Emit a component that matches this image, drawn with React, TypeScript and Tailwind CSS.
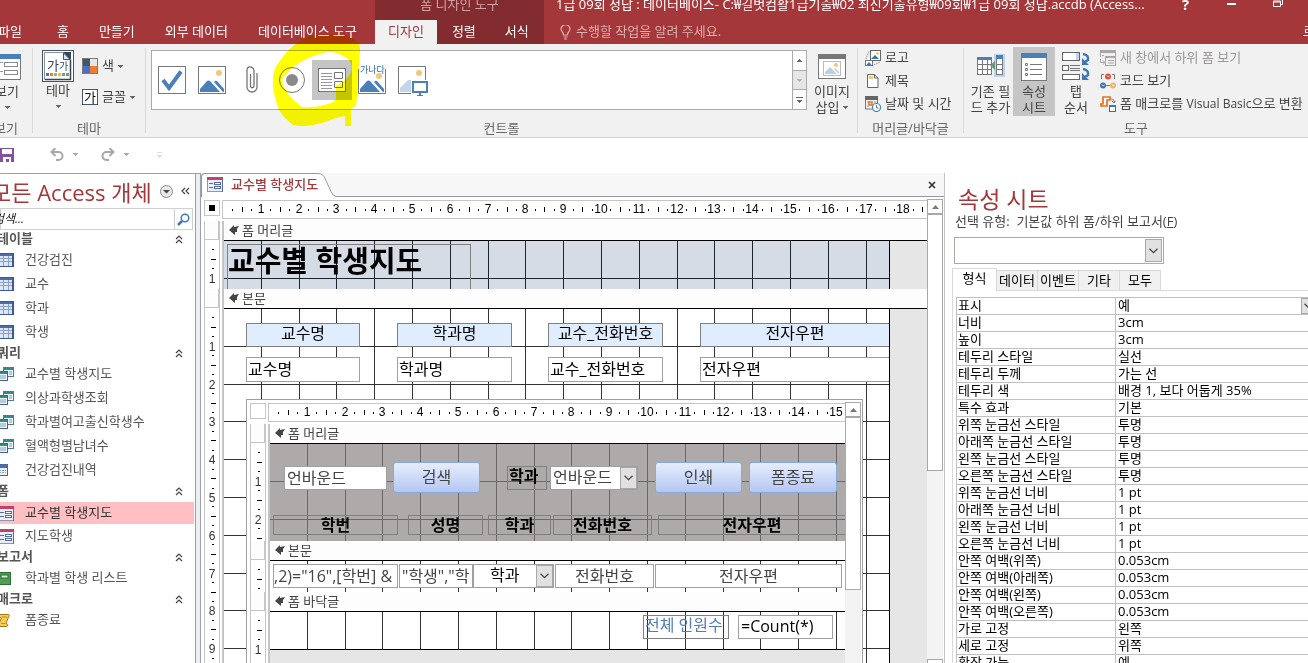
import type { ReactNode } from "react";
import clsx from "clsx";

const CM = 37.8;

const at = (i: number) => Math.floor(i * CM - 0.5);

const range = (n: number) => Array.from({ length: n }, (_, i) => i);

/* ---------- small drawings ---------- */

function Caret({ className = "fill-[#666]" }: { className?: string }) {
  return (
    <svg width="5" height="3" className={clsx("shrink-0", className)} shapeRendering="crispEdges">
      <path d="M0 0h5v1H0zM1 1h3v1H1zM2 2h1v1H2z" />
    </svg>
  );
}

function Chevron() {
  return (
    <svg width="9" height="6" viewBox="0 0 9 6" fill="none" stroke="#444" strokeWidth="1.2">
      <path d="M0.5 0.8 4.5 4.6 8.5 0.8" />
    </svg>
  );
}

function Collapse() {
  return (
    <svg width="8" height="9" viewBox="0 0 8 9" fill="none" stroke="#444" strokeWidth="1.2">
      <path d="M1 4 4 1l3 3M1 8l3-3 3 3" />
    </svg>
  );
}

function TableIcon() {
  return (
    <svg width="16" height="14" viewBox="0 0 16 14">
      <rect x="0.5" y="0.5" width="15" height="13" fill="#dce6f7" stroke="#3d5a94" />
      <path d="M1 1h14v2H1z" fill="#4d6ca8" />
      <path d="M1 5.5h14M1 8.5h14M5.5 3v10M10.5 3v10" stroke="#8ba0c8" />
      <path d="M14.5 1v12" stroke="#3d5a94" />
    </svg>
  );
}

function QueryIcon() {
  return (
    <svg width="16" height="15" viewBox="0 0 16 15">
      <rect x="5.5" y="0.5" width="10" height="9" fill="#f4f8fc" stroke="#47808a" />
      <path d="M6 1h9v2H6z" fill="#2f8f86" />
      <path d="M11 5h3M11 7h3" stroke="#7f9cc0" />
      <rect x="0.5" y="4.5" width="9" height="9" fill="#f4f8fc" stroke="#3f6487" />
      <path d="M1 5h8v2H1z" fill="#2f8f86" />
      <path d="M2 9h6M2 11h6" stroke="#7f9cc0" />
    </svg>
  );
}

function CrosstabIcon() {
  return (
    <svg width="14" height="12" viewBox="0 0 14 12" className="-ml-1">
      <rect x="0.5" y="0.5" width="13" height="11" fill="#eef3fb" stroke="#4a67a0" />
      <path d="M1 1h12v3H1z" fill="#4a6db0" />
      <path d="M2 6.5h10M2 8.5h10" stroke="#8aa3d0" strokeDasharray="2 1" />
    </svg>
  );
}

function FormIcon() {
  return (
    <svg width="16" height="15" viewBox="0 0 16 15">
      <rect x="0.5" y="0.5" width="15" height="14" fill="#e9eefa" stroke="#8c95b4" />
      <path d="M0 0h16v3H0z" fill="#c0426c" />
      <path d="M2 6.5h4M2 10.5h4" stroke="#566ca8" />
      <rect x="7.5" y="5.5" width="6" height="2" fill="#fff" stroke="#566ca8" />
      <rect x="7.5" y="9.5" width="6" height="2" fill="#fff" stroke="#566ca8" />
      <path d="M15.5 3v12" stroke="#5b6a9c" />
    </svg>
  );
}

function ReportIcon() {
  return (
    <svg width="13" height="13" viewBox="0 0 13 13">
      <rect x="0.5" y="0.5" width="12" height="12" fill="#4f9e55" stroke="#2f6b35" />
      <rect x="3" y="3" width="7" height="3" fill="#d8efd6" stroke="#2f6b35" />
      <path d="M1.5 1v11" stroke="#8fcf90" />
    </svg>
  );
}

function MacroIcon() {
  return (
    <svg width="12" height="13" viewBox="0 0 12 13">
      <path d="M2 .5h8.5c1 0 1 2 0 2.5L8 9.5c2 0 2.5 3 .5 3H1c-2-.3-1.5-3 0-3L3.5 4C1 3.5 1 1 2 .5z" fill="#f5cc55" stroke="#a5761c" />
      <path d="M4 3h5M3 9.5h4" stroke="#c58d22" />
    </svg>
  );
}

function ViewIcon() {
  return (
    <svg width="28" height="26" viewBox="0 0 28 26">
      <path d="M0 0h28v5H0z" fill="#4a80b9" />
      <path d="M.5 5v20.5h27V5" fill="#fff" stroke="#777" />
      <path d="M3 8.5h7M3 17.5h7" stroke="#999" />
      <rect x="11.5" y="8.5" width="13" height="4" fill="#fff" stroke="#8a8a8a" />
      <rect x="11.5" y="16.5" width="13" height="4" fill="#fff" stroke="#8a8a8a" />
    </svg>
  );
}

function ThemeIcon() {
  return (
    <svg width="32" height="32" viewBox="0 0 32 32">
      <rect x="0.5" y="0.5" width="31" height="31" fill="#fff" stroke="#44546a" />
      <path d="M2.5 2.5h19l7 7V29.5h-26z" fill="#fff" stroke="#8a93a3" />
      <path d="M21 2h8v8z" fill="#33455f" />
      <path d="M21.5 3v6.5H28z" fill="#dfe4ec" stroke="#44546a" />
      <path d="M28.5 10v19.5H3" fill="none" stroke="#33455f" strokeWidth="1.5" />
      <text x="5" y="20" fontSize="13" fill="#33455f">가</text>
      <text x="17" y="20" fontSize="10" fill="#33455f">가</text>
      <path d="M4 23h3v3H4z" fill="#4472c4" />
      <path d="M8 23h3v3H8z" fill="#ed7d31" />
      <path d="M12 23h3v3h-3z" fill="#a5a5a5" />
      <path d="M16 23h3v3h-3z" fill="#ffc000" />
      <path d="M20 23h3v3h-3z" fill="#5b9bd5" />
      <path d="M24 23h3v3h-3z" fill="#70ad47" />
    </svg>
  );
}

function ColorsIcon() {
  return (
    <svg width="16" height="16" viewBox="0 0 16 16">
      <path d="M0 0h16v16H0z" fill="#7a7a7a" />
      <path d="M1 1h7v7H1z" fill="#44546a" />
      <path d="M8 1h7v7H8z" fill="#e7e6e6" />
      <path d="M1 8h7v7H1z" fill="#4472c4" />
      <path d="M8 8h7v7H8z" fill="#ed7d31" />
    </svg>
  );
}

function FontsIcon() {
  return (
    <svg width="16" height="16" viewBox="0 0 16 16">
      <rect x="0.5" y="0.5" width="15" height="15" fill="#fff" stroke="#44546a" />
      <text x="2" y="13" fontSize="13" fill="#111">가</text>
    </svg>
  );
}

const galleryIcons: { name: string; art: ReactNode }[] = [
  {
    name: "확인란",
    art: (
      <>
        <rect x="0.5" y="0.5" width="27" height="27" fill="#fff" stroke="#777" />
        <path d="M5 14l6 8L23 5.5" fill="none" stroke="#4a80b9" strokeWidth="4" />
      </>
    ),
  },
  {
    name: "이미지",
    art: (
      <>
        <rect x="0.5" y="0.5" width="27" height="27" fill="#fff" stroke="#777" />
        <circle cx="21" cy="7" r="3" fill="#edc87e" />
        <path d="M2 26v-3l7-8q1.5-1 3 0l10 11zM16 16q1.5-2 3-1l7 8v3h-1z" fill="#4a80b9" />
      </>
    ),
  },
  {
    name: "첨부 파일",
    art: (
      <path
        d="M12.5 8v12a1.5 1.5 0 0 0 3.5 0V5a4 4 0 0 0-5-4q-2 .5-2 3v17a5 5 0 0 0 10 0V7"
        fill="none"
        stroke="#777"
        strokeWidth="1.3"
      />
    ),
  },
  {
    name: "옵션 단추",
    art: (
      <>
        <circle cx="14" cy="14" r="12.5" fill="#fff" stroke="#777" />
        <circle cx="14" cy="14" r="6" fill="#8a8a8a" />
      </>
    ),
  },
  {
    name: "하위 폼/하위 보고서",
    art: (
      <>
        <rect x="0.5" y="2.5" width="27" height="23" fill="#fff" stroke="#777" />
        <path d="M3 7.5h11M3 10.5h11M3 13.5h11M3 16.5h11M3 19.5h11M3 22.5h11" stroke="#999" />
        <path d="M16.5 6.5h8v6h-8zM16.5 15.5h8v6h-8z" fill="#fff" stroke="#777" />
      </>
    ),
  },
  {
    name: "바운드 개체 틀",
    art: (
      <>
        <path d="M.5 3v24.5h27V3" fill="#fff" stroke="#777" />
        <circle cx="21" cy="10" r="3" fill="#edc87e" />
        <path d="M2 26v-3l7-8q1.5-1 3 0l10 11zM16 16q1.5-2 3-1l7 8v3h-1z" fill="#4a80b9" />
        <text x="2" y="7" fontSize="9" fill="#2f6ca8">가나다</text>
      </>
    ),
  },
  {
    name: "언바운드 개체 틀",
    art: (
      <>
        <path d="M13 27.5H.5V.5h27V14" fill="#fff" stroke="#777" />
        <circle cx="21" cy="7" r="3" fill="#edc87e" />
        <path d="M2 26v-4l8-8h3v12z" fill="#c2d5ea" />
        <rect x="15" y="16" width="14" height="10" fill="#fff" stroke="#4a80b9" strokeWidth="2" />
        <path d="M21 27h2v2h-2zM19 29h6v1h-6z" fill="#4a80b9" />
      </>
    ),
  },
];

function InsertImageIcon() {
  return (
    <svg width="28" height="26" viewBox="0 0 28 26">
      <rect x="0.5" y="0.5" width="27" height="24" fill="#fff" stroke="#777" />
      <path d="M0 0h28v5H0z" fill="#777" />
      <rect x="5.5" y="7.5" width="17" height="14" fill="#fff" stroke="#bbb" />
      <circle cx="18" cy="11" r="2" fill="#edc87e" />
      <path d="M7 20v-2l5-5 7 7zM16 15l1-1 4 4v2z" fill="#b9cfe6" />
    </svg>
  );
}

function LogoIcon() {
  return (
    <svg width="16" height="16" viewBox="0 0 16 16">
      <rect x="5.5" y="0.5" width="10" height="10" fill="#fff" stroke="#666" />
      <circle cx="12.5" cy="3.5" r="1.3" fill="#edb95e" />
      <path d="M6 9l4-4 4 4z" fill="#3a73b0" />
      <rect x="0.5" y="10.5" width="7" height="5" fill="#fff" stroke="#777" />
      <path d="M1.5 15 4 12l2.5 3z" fill="#3a73b0" />
      <path d="M1 9 4 1M9 15l6-3" stroke="#777" strokeDasharray="1 1" />
    </svg>
  );
}

function TitleIcon() {
  return (
    <svg width="16" height="16" viewBox="0 0 16 16">
      <path d="M2.5 1.5h7l3.5 3.5v9.5H2.5z" fill="#fff" stroke="#666" />
      <path d="M9.5 1.5V5H13" fill="none" stroke="#666" />
      <path d="M4 3h4v3H4z" fill="#edc87e" />
    </svg>
  );
}

function DateIcon() {
  return (
    <svg width="16" height="16" viewBox="0 0 16 16">
      <path d="M0 0h13v4H0z" fill="#666" />
      <path d="M.5 3v10h8M12.5 4v3" fill="none" stroke="#777" />
      <path d="M2 6h2M2 10h2M9 6h2" stroke="#999" />
      <rect x="4" y="6" width="3" height="3" fill="#fff" stroke="#e2711d" strokeWidth="1.5" />
      <circle cx="11.5" cy="11.5" r="4" fill="#fff" stroke="#4a80b9" strokeWidth="1.2" />
      <path d="M11.5 9v3h2" fill="none" stroke="#4a80b9" />
    </svg>
  );
}

function FieldsIcon() {
  return (
    <svg width="28" height="26" viewBox="0 0 28 26">
      <path d="M17 0h11v23H17z" fill="#bcd3ea" />
      <rect x="0.5" y="3.5" width="14" height="17" fill="#fff" stroke="#777" />
      <path d="M0 3h15v3H0z" fill="#4a80b9" />
      <path d="M1 10.5h13M1 15.5h13M5.5 6v14M10.5 6v14" stroke="#777" />
      <rect x="19.5" y="3.5" width="6" height="17" fill="#fff" stroke="#777" />
      <path d="M19 1h7v4h-7z" fill="#4a80b9" />
      <path d="M20 10.5h5M20 15.5h5" stroke="#777" />
      <path d="M18 7v9l-5-4.5z" fill="#5d9c80" />
    </svg>
  );
}

function SheetIcon() {
  return (
    <svg width="26" height="28" viewBox="0 0 26 28">
      <rect x="0.5" y="0.5" width="25" height="27" fill="#fff" stroke="#777" />
      <path d="M0 0h26v5H0z" fill="#4a80b9" />
      <path d="M9 11.5h12M9 16.5h12M9 21.5h12" stroke="#777" />
      <path d="M4.5 10.5h2v2h-2zM4.5 15.5h2v2h-2zM4.5 20.5h2v2h-2z" fill="#fff" stroke="#777" />
    </svg>
  );
}

function TabOrderIcon() {
  return (
    <svg width="28" height="29" viewBox="0 0 28 29">
      <rect x="0.5" y="0.5" width="17" height="8" fill="#fff" stroke="#666" />
      <path d="M14 1h3v7h-3z" fill="#bcd3ea" />
      <rect x="0.5" y="13.5" width="6" height="5" fill="#fff" stroke="#666" />
      <path d="M8 13.5h10M8 16.5h10M8 18.5h10" stroke="#777" />
      <rect x="0.5" y="22.5" width="17" height="5" fill="#fff" stroke="#666" />
      <path d="M21 2q6 1 5 6l-3 2M21 17q6 1 5 6l-3 2" fill="none" stroke="#3f77b4" strokeWidth="2.5" />
      <path d="M20 6v7h7zM20 21v7h7z" fill="#3f77b4" />
    </svg>
  );
}

function NewWindowIcon() {
  return (
    <svg width="16" height="16" viewBox="0 0 16 16" fill="none" stroke="#aaa5a8">
      <path d="M.5 7V.5h15V6" />
      <path d="M0 1.5h16" strokeWidth="3" />
      <rect x="5.5" y="6.5" width="10" height="9" />
      <path d="M5 7.5h11M8 10.5h6M8 13h6M2 5.5h2M.5 9v3.5h4M3 10.5l2 2-2 2" />
    </svg>
  );
}

function CodeIcon() {
  return (
    <svg width="16" height="16" viewBox="0 0 16 16">
      <path d="M4 1.5H1.5V6M12 1.5h2.5V6M6 12.5h4" fill="none" stroke="#777" />
      <circle cx="8" cy="3.5" r="3" fill="#d9533a" />
      <circle cx="3" cy="12.5" r="3" fill="#3f77b4" />
      <circle cx="13" cy="12.5" r="3" fill="#edb95e" />
      <path d="M7 2.5 8 4l1.5-1M2 11.5 3 13l1.5-1M12 11.5l1 1.5 1.5-1" stroke="#fff" fill="none" strokeWidth=".7" />
    </svg>
  );
}

function ConvertIcon() {
  return (
    <svg width="16" height="16" viewBox="0 0 16 16">
      <path d="M3 1h7v3H7v6H1V8h2z" fill="#fff" stroke="#e2711d" strokeWidth="1.7" />
      <path d="M11 3q4 0 3 4M12 5l2 2 1.5-2" stroke="#777" fill="none" />
      <rect x="9.5" y="9.5" width="6" height="6" fill="#fff" stroke="#666" />
      <path d="M9 9h7v2H9z" fill="#3f77b4" />
    </svg>
  );
}

/* highlighter stroke drawn around the subform control */
function Highlighter() {
  return (
    <svg
      className="pointer-events-none absolute left-[272px] top-[34px] mix-blend-multiply"
      width="88"
      height="92"
      viewBox="0 0 88 92"
      aria-hidden="true"
    >
      <path
        fillRule="evenodd"
        fill="#ff0"
        d="M1 45q0-8 4-14t8-11 12-11 14-7 18-2q12 0 19 3 8 3 11 6 2 6 0 16-1 30-3 47l-5 2v30h-6V82q-6 1-12 3-10 4-20 6-12 2-20 0-9-7-14-15Q0 58 1 45zM10 46q1 8 7 15 6 7 13 12 12 1 22-2 10-2 12-6V52q12-6 15-14 2-7-2-12Q66 17 56 18q-12 2-22 7-10 5-17 12-6 5-7 9z"
      />
    </svg>
  );
}

/* ---------- title bar and ribbon ---------- */

const tabs = ["홈", "만들기", "외부 데이터", "데이터베이스 도구"];

function TitleBar() {
  return (
    <header className="flex h-11 shrink-0 overflow-hidden whitespace-nowrap bg-[#a4373a] text-white">
      <nav className="flex w-[375px] shrink-0 items-end">
        <button className="-ml-[17px] mr-[5px] h-6 px-[15px]">파일</button>
        {tabs.map((t) => (
          <button key={t} className="h-6 px-[15px]">
            {t}
          </button>
        ))}
      </nav>
      <div className="flex w-[169px] shrink-0 flex-col bg-[#822c2f]">
        <span className="h-5 text-center leading-[8px] text-[#d3a0a2]">폼 디자인 도구</span>
        <div className="flex h-6">
          <button className="bg-[#f1f1f1] px-[13px] text-[#a4373a]">디자인</button>
          <button className="px-[15px]">정렬</button>
          <button className="px-[14px]">서식</button>
        </div>
      </div>
      <div className="flex min-w-0 flex-1 flex-col">
        <div className="flex h-5 justify-between pl-3 pr-6 leading-[8px]">
          <h1>1급 09회 정답 : 데이터베이스- C:₩길벗컴활1급기출₩02 최신기출유형₩09회₩1급 09회 정답.accdb (Access...</h1>
          <div className="flex w-[102px] items-start justify-between">
            <button className="text-[15px] font-bold leading-[8px]" aria-label="도움말">
              ?
            </button>
            <button aria-label="최소화" className="pt-[3px]">
              <svg width="9" height="2">
                <path d="M0 0h9v2H0z" fill="#fff" />
              </svg>
            </button>
            <button aria-label="이전 크기로 복원">
              <svg width="11" height="7" fill="none" stroke="#fff">
                <path d="M.5 1v5.5h7V1zM0 2h8M9.5 0v4.5H8" />
              </svg>
            </button>
          </div>
        </div>
        <div className="flex h-6 items-center pl-4">
          <svg width="11" height="15" viewBox="0 0 11 15" fill="none" stroke="#dfb0b1" strokeWidth="1.2">
            <path d="M3.5 10q0-2-1.5-3.5a4.3 4.3 0 1 1 7 0Q7.5 8 7.5 10zM3.5 12h4M4 14h3" />
          </svg>
          <input
            aria-label="수행할 작업"
            className="ml-[5px] w-[240px] bg-transparent placeholder:text-[#dfb0b1]"
            placeholder="수행할 작업을 알려 주세요."
          />
          <button className="ml-auto w-[5px] overflow-hidden text-left">로그인</button>
        </div>
      </div>
    </header>
  );
}

function Group({ label, className, children }: { label: string; className?: string; children: ReactNode }) {
  return (
    <section className={clsx("flex shrink-0 flex-col", className)}>
      <div className="flex h-[75px] items-start">{children}</div>
      <div className="text-center leading-[18px] text-[#666]">{label}</div>
    </section>
  );
}

function Divider() {
  return <div className="my-1 w-px shrink-0 bg-[#dadada]" />;
}

function BigButton({ icon, lines, caret, active, className }: {
  icon: ReactNode;
  lines: string[];
  caret?: boolean;
  active?: boolean;
  className?: string;
}) {
  return (
    <button
      className={clsx("flex h-[69px] shrink-0 flex-col items-center pt-1 leading-4", active && "bg-[#c5c5c5]", className)}
    >
      <span className="flex h-[31px] items-center">{icon}</span>
      <span className="mt-[1px]">{lines[0]}</span>
      <span className="flex h-4 items-center gap-1">
        {lines[1]}
        {caret && <Caret />}
      </span>
    </button>
  );
}

function SmallButton({ icon, label, caret, disabled }: {
  icon: ReactNode;
  label: ReactNode;
  caret?: boolean;
  disabled?: boolean;
}) {
  return (
    <button disabled={disabled} className="flex h-[23px] items-center gap-1 pb-px disabled:text-[#9b979a]">
      {icon}
      <span>{label}</span>
      {caret && <Caret className="fill-[#666]" />}
    </button>
  );
}

function Ribbon() {
  return (
    <div className="flex h-[94px] shrink-0 overflow-hidden whitespace-nowrap border-b border-[#d5d5d5] bg-[#f1f1f1] text-[#444]">
      <Group label="보기" className="-ml-[20px] w-[52px]">
        <BigButton className="ml-[11px] mt-[3px] w-8" icon={<ViewIcon />} lines={["보기", ""]} caret />
      </Group>
      <Divider />
      <Group label="테마" className="w-28">
        <BigButton className="ml-[7px] mt-[2px] w-9" icon={<ThemeIcon />} lines={["테마", ""]} caret />
        <div className="ml-[6px] flex flex-col gap-2 pt-[11px]">
          <SmallButton icon={<ColorsIcon />} label="색" caret />
          <SmallButton icon={<FontsIcon />} label="글꼴" caret />
        </div>
      </Group>
      <Divider />
      <Group label="컨트롤" className="min-w-0 flex-1">
        <div className="ml-[5px] mt-[6px] flex h-[60px] min-w-0 flex-1 border border-[#ababab] bg-white">
          <div className="flex flex-1 items-center">
            {galleryIcons.map((g, i) => (
              <button
                key={g.name}
                aria-label={g.name}
                className={clsx("flex h-10 w-10 items-center justify-center", i === 4 && "bg-[#c5c5c5]")}
              >
                <svg width="28" height="28" viewBox="0 0 28 28" overflow="visible">
                  {g.art}
                </svg>
              </button>
            ))}
          </div>
          <div className="flex w-[14px] flex-col divide-y divide-[#ababab] border-l border-[#ababab]">
            <button aria-label="위로" className="flex flex-1 items-center justify-center">
              <Caret className="rotate-180 fill-[#666]" />
            </button>
            <button aria-label="아래로" className="flex flex-1 items-center justify-center bg-[#e6e6e6]">
              <Caret className="fill-[#b5b5b5]" />
            </button>
            <button aria-label="자세히" className="flex flex-1 flex-col items-center justify-center gap-[2px]">
              <span className="h-px w-[7px] bg-[#666]" />
              <Caret />
            </button>
          </div>
        </div>
        <BigButton className="mx-[5px] mt-[3px] w-10" icon={<InsertImageIcon />} lines={["이미지", "삽입"]} caret />
      </Group>
      <Divider />
      <Group label="머리글/바닥글" className="w-[105px]">
        <div className="flex flex-col pl-[7px] pt-[3px]">
          <SmallButton icon={<LogoIcon />} label="로고" />
          <SmallButton icon={<TitleIcon />} label="제목" />
          <SmallButton icon={<DateIcon />} label="날짜 및 시간" />
        </div>
      </Group>
      <Divider />
      <Group label="도구" className="w-[344px]">
        <BigButton className="ml-1 mt-[3px] w-[45px]" icon={<FieldsIcon />} lines={["기존 필", "드 추가"]} />
        <BigButton className="mt-[3px] w-[42px]" icon={<SheetIcon />} lines={["속성", "시트"]} active />
        <BigButton className="mt-[3px] w-[42px]" icon={<TabOrderIcon />} lines={["탭", "순서"]} />
        <div className="flex flex-col pl-[3px] pt-[3px]">
          <SmallButton icon={<NewWindowIcon />} label="새 창에서 하위 폼 보기" disabled />
          <SmallButton icon={<CodeIcon />} label="코드 보기" />
          <SmallButton
            icon={<ConvertIcon />}
            label={
              <>
                폼 매크로를 <span className="text-xs">Visual Basic</span>으로 변환
              </>
            }
          />
        </div>
      </Group>
    </div>
  );
}

function QuickAccess() {
  return (
    <div className="flex h-[35px] shrink-0 items-center bg-white pb-[2px]">
      <button aria-label="저장">
        <svg width="14" height="14" viewBox="0 0 14 14">
          <path d="M0 0h14v14H0z" fill="#8052a0" />
          <path d="M2 1h10v5H2zM3 9h8v5H9v-3H6v3H3z" fill="#fff" />
        </svg>
      </button>
      <button aria-label="실행 취소" className="ml-9 flex items-center gap-[9px]">
        <svg width="14" height="13" viewBox="0 0 14 13" fill="none" stroke="#a8a8a8" strokeWidth="2">
          <path d="M1 4h7.5a4 4 0 0 1 0 8H6M5.5 0 1.5 4l4 4" />
        </svg>
        <Caret className="fill-[#a8a8a8]" />
      </button>
      <button aria-label="다시 실행" className="ml-[23px] flex items-center gap-[9px]">
        <svg width="14" height="13" viewBox="0 0 14 13" fill="none" stroke="#a8a8a8" strokeWidth="2">
          <path d="M13 4H5.5a4 4 0 0 0 0 8H8M8.5 0l4 4-4 4" />
        </svg>
        <Caret className="fill-[#a8a8a8]" />
      </button>
      <button aria-label="빠른 실행 도구 모음 사용자 지정" className="ml-7 flex flex-col items-center gap-[2px]">
        <span className="h-px w-[5px] bg-[#ddd]" />
        <Caret className="fill-[#ddd]" />
      </button>
    </div>
  );
}

/* ---------- navigation pane ---------- */

const objects = [
  { title: "테이블", icon: <TableIcon />, items: ["건강검진", "교수", "학과", "학생"] },
  {
    title: "쿼리",
    icon: <QueryIcon />,
    items: ["교수별 학생지도", "의상과학생조회", "학과별여고출신학생수", "혈액형별남녀수", "건강검진내역"],
  },
  { title: "폼", icon: <FormIcon />, items: ["교수별 학생지도", "지도학생"] },
  { title: "보고서", icon: <ReportIcon />, items: ["학과별 학생 리스트"] },
  { title: "매크로", icon: <MacroIcon />, items: ["폼종료"] },
];

function NavPane() {
  return (
    <aside className="flex w-[201px] shrink-0 overflow-hidden whitespace-nowrap border-r border-t border-[#9aa0ac] bg-[#eceef1] text-[#555]">
      <div className="flex min-w-0 flex-1 flex-col border-r border-[#9aa0ac] bg-white">
        <div className="-ml-[9px] flex h-[34px] items-center">
          <h2 className="w-[169px] pt-[2px] text-[22px] text-[#a4373a]">모든 Access 개체</h2>
          <button aria-label="범주 선택">
            <svg width="13" height="13" viewBox="0 0 13 13">
              <circle cx="6.5" cy="6.5" r="6" fill="#e8e8ea" stroke="#8b8b92" />
              <path d="M3 5h7L6.5 8.5z" fill="#444" />
            </svg>
          </button>
          <button aria-label="탐색 창 접기" className="ml-2">
            <svg width="9" height="8" viewBox="0 0 9 8" fill="none" stroke="#444" strokeWidth="1.2">
              <path d="M4 1 1 4l3 3M8 1 5 4l3 3" />
            </svg>
          </button>
        </div>
        <div className="mr-[2px] flex h-[22px] border border-[#d0d0d0]">
          <input
            aria-label="검색"
            placeholder="검색..."
            className="-ml-[14px] min-w-0 flex-1 pl-[6px] text-xs italic placeholder:text-[#222]"
          />
          <button aria-label="검색 시작" className="flex w-[18px] items-center justify-center border-l border-[#d0d0d0]">
            <svg width="13" height="13" viewBox="0 0 13 13" fill="none" stroke="#3f77b4">
              <circle cx="8" cy="5" r="3.8" strokeWidth="1.5" />
              <path d="M5 8 1 12" strokeWidth="2.5" />
            </svg>
          </button>
        </div>
        {objects.map((g) => (
          <section key={g.title}>
            <button className="flex h-[18px] w-full items-center justify-between pr-3">
              <h3 className="-ml-[3px] font-bold">{g.title}</h3>
              <Collapse />
            </button>
            <ul>
              {g.items.map((item, i) => (
                <li
                  key={item}
                  className={clsx("mr-px h-6", g.title === "폼" && i === 0 && "bg-[#ffc0c3] bg-clip-content pt-[2px] text-[#333]")}
                >
                  <a href="#" className="-ml-[2px] flex h-full items-center">
                    <span className="w-[27px]">{item === "건강검진내역" ? <CrosstabIcon /> : g.icon}</span>
                    {item}
                  </a>
                </li>
              ))}
            </ul>
          </section>
        ))}
      </div>
      <div className="w-1" />
    </aside>
  );
}

/* ---------- form designer ---------- */

function HRuler({ cm }: { cm: number }) {
  const w = Math.ceil(cm * CM);
  return (
    <svg width={w} height="17" shapeRendering="crispEdges" className="block font-['Liberation_Sans',sans-serif] text-xs">
      {range(Math.ceil(cm)).map((i) => (
        <g key={i}>
          <rect x={at(i + 0.25)} y="8" width="1" height="2" />
          <rect x={at(i + 0.5)} y="6" width="1" height="5" />
          <rect x={at(i + 0.75)} y="8" width="1" height="2" />
          <text x={at(i + 1)} y="12" textAnchor="middle">
            {i + 1}
          </text>
        </g>
      ))}
    </svg>
  );
}

function VRuler({ height }: { height: number }) {
  return (
    <svg
      width="14"
      height={height}
      overflow="visible"
      shapeRendering="crispEdges"
      className="block font-['Liberation_Sans',sans-serif] text-xs"
    >
      {range(Math.round(height / CM)).map((i) => (
        <g key={i}>
          <rect x="7" y={at(i + 0.25)} width="2" height="1" />
          <rect x="6" y={at(i + 0.5)} width="5" height="1" />
          <rect x="7" y={at(i + 0.75)} width="2" height="1" />
          {at(i + 1) <= height && (
            <text x="7" y={at(i + 1) + 5} textAnchor="middle" className="fill-[#333]">
              {i + 1}
            </text>
          )}
        </g>
      ))}
    </svg>
  );
}

function Grid({ width, height, color }: { width: number; height: number; color: string }) {
  return (
    <svg width={width} height={height} className="block" shapeRendering="crispEdges" fill={color}>
      {range(Math.floor(width / CM)).map((i) => (
        <rect key={i} x={at(i + 1)} y="0" width="1" height={height} />
      ))}
      {range(Math.floor(height / CM)).map((i) => (
        <rect key={i} x="0" y={at(i + 1)} width={width} height="1" />
      ))}
    </svg>
  );
}

function Section({ title, width, height, bg = "bg-white", grid = "#333", end, children }: {
  title: string;
  width: number;
  height: number;
  bg?: string;
  grid?: string;
  end?: boolean;
  children?: ReactNode;
}) {
  return (
    <section className="flex">
      <div className="w-4 shrink-0 border-x border-[#c5c5c5] bg-white">
        <div className="mb-px h-[19px] border-b border-r border-[#c5c5c5] bg-[#fdfdfd]" />
        <VRuler height={height} />
      </div>
      <div className="ml-[2px] min-w-0 flex-1 border-l-2 border-[#c5c5c5] bg-[#e6e6e6]">
        <h4 className="flex h-5 items-center gap-[3px] border-b border-black bg-[#fdfdfd] pb-[2px] pl-[5px] leading-4 text-[#444]">
          <svg width="10" height="10" viewBox="0 0 10 10" fill="#444">
            <path d="M0 5 5 0v2l5-1-2 3v3L6 7v3z" />
          </svg>
          {title}
        </h4>
        <div className="flex overflow-hidden">
          <div
            className={clsx("relative shrink-0 overflow-hidden", bg, end ? "border-b border-black" : "border-r border-black")}
            style={{ width, height }}
          >
            <Grid width={width} height={height} color={grid} />
            {children}
          </div>
        </div>
      </div>
    </section>
  );
}

type Box = { label: string; box: string };

function Label({ label, box, look = "border border-[#808080] text-center font-bold" }: Box & { look?: string }) {
  return <span className={clsx("absolute overflow-hidden whitespace-nowrap text-base leading-[18px] text-black", look, box)}>{label}</span>;
}

function TextBox({ label, box, look = "px-[2px] text-[#444]" }: Box & { look?: string }) {
  return (
    <input
      aria-label={label}
      defaultValue={label}
      className={clsx("absolute border border-[#a0a0a0] bg-white pb-[3px] text-base leading-5", look, box)}
    />
  );
}

function Combo({ label, box, look }: Box & { look?: string }) {
  return (
    <div className={clsx("absolute flex border border-[#a0a0a0] bg-white", box)}>
      <select aria-label={label} className={clsx("min-w-0 flex-1 appearance-none pb-[2px] text-base leading-5", look)}>
        <option>{label}</option>
      </select>
      <span className="pointer-events-none absolute inset-y-0 right-0 flex w-[17px] items-center justify-center border border-[#a8a8a8] bg-[#e1e1e1]">
        <Chevron />
      </span>
    </div>
  );
}

function CommandButton({ label, box }: Box) {
  return (
    <button
      className={clsx(
        "absolute rounded-[3px] border border-[#8aa8e0] bg-linear-to-b from-[#e6edfc] to-[#b5c7f2] pb-[2px] text-base leading-5 text-[#444]",
        box,
      )}
    >
      {label}
    </button>
  );
}

function ScrollBar({ thumb, end }: { thumb: string; end?: boolean }) {
  return (
    <div className="flex w-4 shrink-0 flex-col bg-[#f3f3f3]">
      <button aria-label="위로 스크롤" className="flex h-[15px] shrink-0 items-center justify-center border border-[#a8a8a8] bg-white">
        <svg width="7" height="4">
          <path d="M0 4h7L3.5 0z" fill="#777" />
        </svg>
      </button>
      <div className={clsx("border border-[#a8a8a8] bg-white", thumb)} />
      <div className="flex-1" />
      {end && <button aria-label="아래로 스크롤" className="-mb-[11px] h-[15px] shrink-0 border border-[#a8a8a8] bg-white" />}
    </div>
  );
}

function RulerRow({ cm, marker }: { cm: number; marker?: boolean }) {
  return (
    <div className="flex h-[22px] items-start">
      <button
        aria-label="폼 선택"
        className="mt-px flex h-4 w-4 shrink-0 items-center justify-center border border-[#c5c5c5] bg-white"
      >
        {marker && <span className="h-[6px] w-[6px] bg-black" />}
      </button>
      <div className="ml-[2px] mt-px min-w-0 flex-1 overflow-hidden border-y border-l border-[#c5c5c5] bg-white pl-px">
        <HRuler cm={cm} />
      </div>
    </div>
  );
}

function Subform() {
  return (
    <div className="absolute left-[22px] top-[90px] flex h-[520px] w-[617px] border border-[#a0a0a0] bg-white pl-[3px] pr-[1px] pt-[2px]">
      <div className="flex min-w-0 flex-1 flex-col overflow-hidden">
        <RulerRow cm={15.3} />
        <Section title="폼 머리글" width={580} height={97} bg="bg-[#aeaaa9]" grid="#6c6868">
          <TextBox label="언바운드" box="left-[14px] top-[22px] h-[24px] w-[103px]" />
          <CommandButton label="검색" box="left-[123px] top-[18px] h-[31px] w-[87px]" />
          <Label label="학과" box="left-[237px] top-[22px] h-[24px] w-[40px]" look="border border-[#808080] px-px font-bold" />
          <Combo label="언바운드" box="left-[280px] top-[22px] h-[24px] w-[88px]" look="pl-[2px] text-[#444]" />
          <CommandButton label="인쇄" box="left-[385px] top-[18px] h-[31px] w-[87px]" />
          <CommandButton label="폼종료" box="left-[479px] top-[18px] h-[31px] w-[88px]" />
          <Label label="학번" box="left-[3px] top-[71px] h-5 w-[125px]" />
          <Label label="성명" box="left-[138px] top-[71px] h-5 w-[75px]" />
          <Label label="학과" box="left-[218px] top-[71px] h-5 w-[63px]" />
          <Label label="전화번호" box="left-[283px] top-[71px] h-5 w-[99px]" />
          <Label label="전자우편" box="left-[388px] top-[71px] h-5 w-[188px]" />
        </Section>
        <Section title="본문" width={580} height={31}>
          <TextBox label={',2)="16",[학번] &'} box="left-[3px] top-[3px] h-6 w-[125px]" look="text-[#444]" />
          <TextBox label={'"학생","학번")'} box="left-[129px] top-[3px] h-6 w-[74px]" />
          <Combo label="학과" box="left-[203px] top-[3px] h-6 w-[81px]" look="pl-4 text-black" />
          <TextBox label="전화번호" box="left-[285px] top-[3px] h-6 w-[99px]" look="text-center text-[#444]" />
          <TextBox label="전자우편" box="left-[385px] top-[3px] h-6 w-[187px]" look="text-center text-[#444]" />
        </Section>
        <Section title="폼 바닥글" width={580} height={38} end>
          <Label
            label="전체 인원수"
            box="left-[373px] top-[3px] h-6 w-[86px]"
            look="border border-[#808080] px-px text-[#4f7dbd]!"
          />
          <TextBox label="=Count(*)" box="left-[468px] top-[3px] h-6 w-[95px]" look="px-[2px] text-black" />
        </Section>
        <div className="flex min-h-0 flex-1">
          <div className="w-4 shrink-0 border-x border-[#c5c5c5]" />
          <div className="ml-[2px] flex-1 border-l-2 border-[#c5c5c5] bg-[#e6e6e6]" />
        </div>
      </div>
      <ScrollBar thumb="h-[173px]" />
    </div>
  );
}

const headerLook = "border border-[#808080] bg-[#e0edff] text-center";
const fieldLook = "px-px text-black";

function Designer() {
  return (
    <main className="flex min-w-0 flex-1 flex-col overflow-hidden border-r border-[#c5c5c5] bg-white">
      <div className="flex h-6 shrink-0 items-center bg-linear-to-b from-[#f7f7f7] from-[23px] to-[#9297a3] to-[23px]">
        <button className="flex h-6 shrink-0 items-center rounded-tl-[4px] border-l border-t border-[#9297a3] bg-white pb-[3px] pl-[5px] text-[#a4373a]">
          <FormIcon />
          <span className="ml-2 font-medium leading-5">교수별 학생지도</span>
        </button>
        <svg width="18" height="24" viewBox="0 0 18 24" className="shrink-0">
          <path d="M0 .5q5 0 7 5l6 13q2 4.500 5 5V24H0z" fill="#fff" />
          <path d="M0 .5q5 0 7 5l6 13q2 4.500 5 5" fill="none" stroke="#9297a3" />
        </svg>
        <button aria-label="닫기" className="ml-auto mr-2">
          <svg width="8" height="8" viewBox="0 0 8 8" stroke="#333" strokeWidth="1.7">
            <path d="M1 1l6 6M7 1 1 7" />
          </svg>
        </button>
      </div>
      <div className="flex min-h-0 flex-1 pl-[3px] pr-px pt-[2px]">
        <div className="min-w-0 flex-1 overflow-hidden">
          <RulerRow cm={18.6} marker />
          <Section title="폼 머리글" width={666} height={48} bg="bg-[#d5dce5]" grid="#1c242e">
            <Label
              label="교수별 학생지도"
              box="left-[3px] top-[3px] h-[60px] w-[244px]"
              look="border border-[#808080] text-[29px]! leading-[32px]! font-bold"
            />
          </Section>
          <Section title="본문" width={666} height={620}>
            <Label label="교수명" box="left-[22px] top-[14px] h-6 w-[114px]" look={headerLook} />
            <Label label="학과명" box="left-[173px] top-[14px] h-6 w-[115px]" look={headerLook} />
            <Label label="교수_전화번호" box="left-[324px] top-[14px] h-6 w-[115px]" look={headerLook} />
            <Label label="전자우편" box="left-[476px] top-[14px] h-6 w-[190px]" look={headerLook} />
            <TextBox label="교수명" box="left-[22px] top-[48px] h-[25px] w-[114px]" look={fieldLook} />
            <TextBox label="학과명" box="left-[173px] top-[48px] h-[25px] w-[115px]" look={fieldLook} />
            <TextBox label="교수_전화번호" box="left-[324px] top-[48px] h-[25px] w-[115px]" look={fieldLook} />
            <TextBox label="전자우편" box="left-[476px] top-[48px] h-[25px] w-[190px]" look={fieldLook} />
            <Subform />
          </Section>
        </div>
        <ScrollBar thumb="h-[257px]" end />
      </div>
    </main>
  );
}

/* ---------- property sheet ---------- */

const properties = [
  ["표시", "예"],
  ["너비", "3cm"],
  ["높이", "3cm"],
  ["테두리 스타일", "실선"],
  ["테두리 두께", "가는 선"],
  ["테두리 색", "배경 1, 보다 어둡게 35%"],
  ["특수 효과", "기본"],
  ["위쪽 눈금선 스타일", "투명"],
  ["아래쪽 눈금선 스타일", "투명"],
  ["왼쪽 눈금선 스타일", "투명"],
  ["오른쪽 눈금선 스타일", "투명"],
  ["위쪽 눈금선 너비", "1 pt"],
  ["아래쪽 눈금선 너비", "1 pt"],
  ["왼쪽 눈금선 너비", "1 pt"],
  ["오른쪽 눈금선 너비", "1 pt"],
  ["안쪽 여백(위쪽)", "0.053cm"],
  ["안쪽 여백(아래쪽)", "0.053cm"],
  ["안쪽 여백(왼쪽)", "0.053cm"],
  ["안쪽 여백(오른쪽)", "0.053cm"],
  ["가로 고정", "왼쪽"],
  ["세로 고정", "위쪽"],
  ["확장 가능", "예"],
];

function PropertySheet() {
  return (
    <aside className="flex w-[363px] shrink-0 flex-col overflow-hidden whitespace-nowrap bg-white pl-[7px] pt-3 text-black">
      <h2 className="pl-[6px] text-[23px] leading-7 text-[#a4373a]">속성 시트</h2>
      <label htmlFor="selection" className="pl-[3px] leading-4 text-[#444]">
        선택 유형:&nbsp; 기본값 하위 폼/하위 보고서(<u>F</u>)
      </label>
      <div className="relative ml-[2px] mt-2 h-[27px] w-[210px] border border-[#a8a8b0]">
        <select id="selection" className="h-full w-full appearance-none" />
        <span className="pointer-events-none absolute inset-y-px right-px flex w-[17px] items-center justify-center border border-[#a8a8a8] bg-[#e1e1e1]">
          <Chevron />
        </span>
      </div>
      <div className="mt-1 flex h-[23px] items-end border-b border-[#d9d9d9]" role="tablist">
        <button role="tab" aria-selected="true" className="-mb-px h-[23px] w-[45px] border-x border-t border-[#d9d9d9] bg-white pb-[3px]">
          형식
        </button>
        {["데이터", "이벤트", "기타", "모두"].map((t) => (
          <button key={t} role="tab" aria-selected="false" className="h-5 w-[41px] border-r border-t border-[#d9d9d9] bg-[#f0f0f0]">
            {t}
          </button>
        ))}
      </div>
      <div className="min-h-0 flex-1 overflow-hidden border-l border-[#d9d9d9] pl-[3px] pt-[6px]">
        <table className="w-full table-fixed border-collapse">
          <tbody>
            {properties.map(([name, value], i) => (
              <tr key={name} className="h-[17px] align-top leading-[14px]">
                <th className="w-[159px] border border-[#c0c0c0] p-0 pl-px text-left font-normal">{name}</th>
                <td className="border-y border-[#c0c0c0] p-0 pl-[2px]">
                  <div className="flex h-4 justify-between">
                    {value}
                    {i === 0 && (
                      <button
                        aria-label="값 선택"
                        className="flex h-4 w-[7px] items-center overflow-hidden border-y border-l border-[#a8a8a8] bg-[#e1e1e1] pl-[2px]"
                      >
                        <span className="shrink-0">
                          <Chevron />
                        </span>
                      </button>
                    )}
                  </div>
                </td>
              </tr>
            ))}
          </tbody>
        </table>
      </div>
    </aside>
  );
}

export default function App() {
  return (
    <div className="relative flex h-screen flex-col overflow-hidden bg-white font-['Open_Sans','Noto_Sans_CJK_KR',sans-serif] text-[13px]">
      <TitleBar />
      <Ribbon />
      <QuickAccess />
      <div className="flex min-h-0 flex-1">
        <NavPane />
        <Designer />
        <PropertySheet />
      </div>
      <Highlighter />
    </div>
  );
}
